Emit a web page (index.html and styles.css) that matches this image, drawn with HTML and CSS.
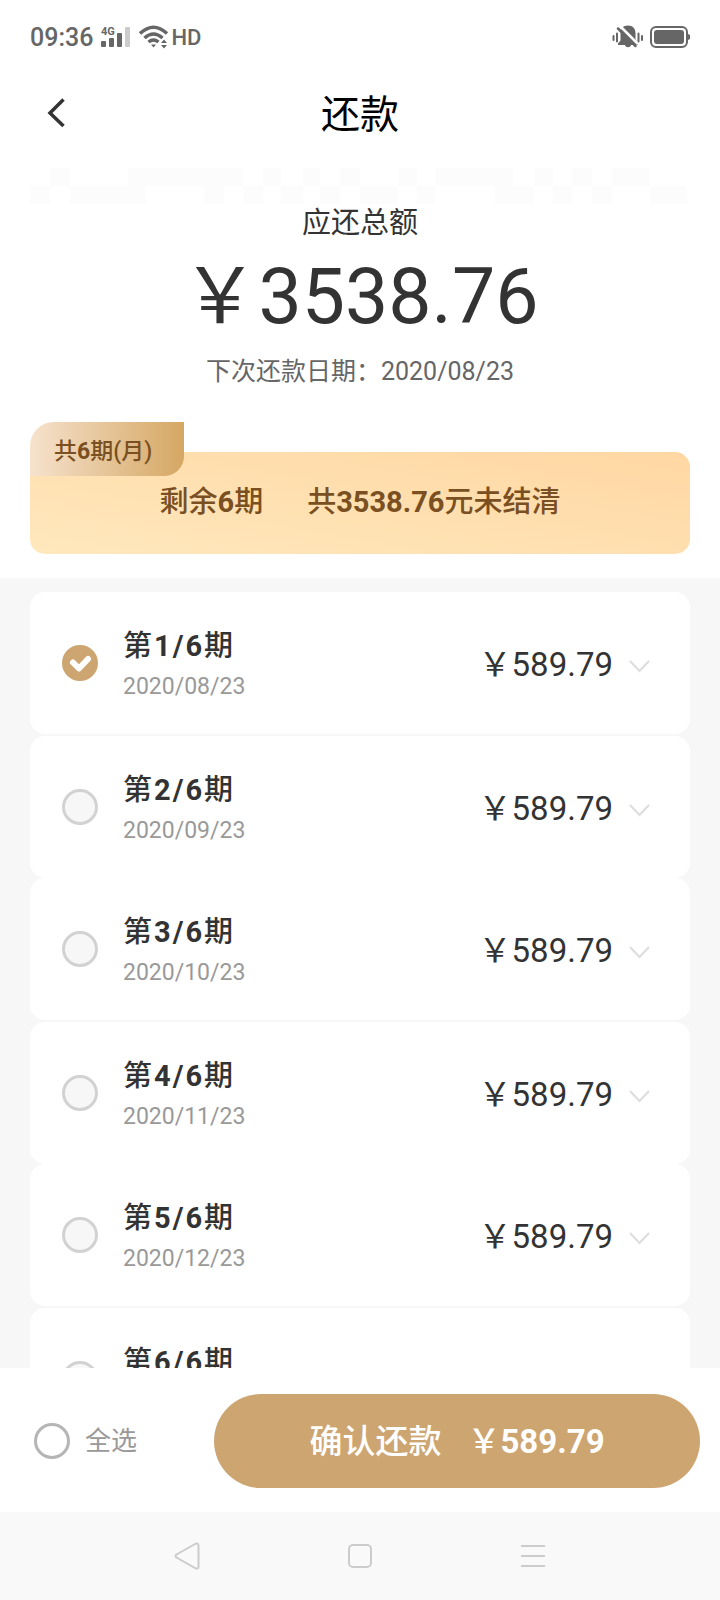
FILE: index.html
```
<!DOCTYPE html>
<html lang="zh-CN">
<head>
  <meta charset="UTF-8" />
  <meta name="viewport" content="width=device-width, initial-scale=1.0" />
  <title>还款</title>
  <link rel="stylesheet" href="styles.css">
</head>
<body>
  <div class="status-bar">
    <span class="time">09:36</span>
    <svg class="signal" width="30" height="22" viewBox="0 0 30 22" fill="#666">
      <text x="0" y="9" class="signal-label">4G</text>
      <rect x="0" y="15" width="5" height="6" rx="1" />
      <rect x="8" y="12" width="5" height="9" rx="1" />
      <rect x="16" y="7" width="5" height="14" rx="1" />
      <rect x="24" y="1" width="5" height="20" rx="1" fill="#ccc" />
    </svg>
    <svg class="wifi" width="30" height="24" viewBox="0 0 30 24" fill="none" stroke="#666" stroke-width="3.500">
      <path d="M1 8.500Q14.500 -4 28 8.500" />
      <path d="M5.500 13Q14.500 5 23.500 13" />
      <path d="M9.500 17Q14.500 13 19.500 17" />
      <path d="M12 19.500h5l-2.500 3z" fill="#666" stroke="none" />
      <path d="M22 18l3-3.500 3 3.500zM22 20h6l-3 3.500z" fill="#666" stroke="none" />
    </svg>
    <span class="hd">HD</span>
    <svg class="mute" width="32" height="24" viewBox="0 0 32 24" fill="#666">
      <path d="M16 0.500c5 0 7.500 3.500 7.500 7.500v6l2.500 5v1h-7c-.5 3-5.500 3-6 0H6v-1.500l2.500-3V8c0-4 2.500-7.500 7.500-7.500z" />
      <path d="M9 2L26 19" stroke="#fff" stroke-width="2.500" />
      <path d="M6 3.500L23.500 21" stroke="#666" stroke-width="2.500" stroke-linecap="round" />
      <path d="M1.500 11v4M5 8.500v8M26.500 8.500v8M30 11v4" stroke="#666" stroke-width="2" stroke-linecap="round" />
    </svg>
    <svg class="battery" width="40" height="22" viewBox="0 0 40 22">
      <rect x="1" y="1" width="36" height="20" rx="5" fill="none" stroke="#666" stroke-width="2" />
      <rect x="4" y="4" width="30" height="14" rx="3" fill="#666" />
      <path d="M38 8l2 1v4l-2 1z" fill="#666" />
    </svg>
  </div>

  <header class="header">
    <button class="back-button" aria-label="返回">
      <svg width="20" height="30" viewBox="0 0 20 30" fill="none" stroke="#333" stroke-width="3.500">
        <path d="M16.500 1.500L3 15l13.500 13" />
      </svg>
    </button>
    <h1>还款</h1>
  </header>

  <section class="summary">
    <svg class="mosaic" width="100%" height="36" viewBox="0 0 660 36" preserveAspectRatio="none" fill="#fcfcfc">
      <path d="M20 0h20v18H20zM98 0h115v18H98zM233 0h18v18h-18zM273 0h17v18h-17zM310 0h20v18h-20zM368 0h19v18h-19zM405 0h78v18h-78zM504 0h19v18h-19zM542 0h20v18h-20zM582 0h38v18h-38z" />
      <path d="M0 18h20v18H0zM40 18h76v18H40zM174 18h20v18h-20zM213 18h20v18h-20zM251 18h22v18h-22zM290 18h20v18h-20zM330 18h38v18h-38zM387 18h18v18h-18zM465 18h39v18h-39zM523 18h19v18h-19zM562 18h20v18h-20zM620 18h37v18h-37z" />
    </svg>
    <p class="summary-title">应还总额</p>
    <p class="summary-amount">￥3538.76</p>
    <p class="summary-date">下次还款日期：2020/08/23</p>
    <div class="banner">
      <span class="tag">共<b>6</b>期(月)</span>
      <span>剩余<b>6</b>期</span>
      <span>共<b>3538.76</b>元未结清</span>
    </div>
  </section>

  <main class="list">
    <div class="item">
      <label class="check">
        <input type="checkbox" id="p1" checked />
        <svg width="36" height="36" viewBox="0 0 36 36"><path d="M11 17.500l6 6 9-9.500" /></svg>
      </label>
      <label class="info" for="p1"><span class="period">第<b>1/6</b>期</span><span class="date">2020/08/23</span></label>
      <span class="price">￥589.79</span>
      <button class="expand" aria-label="展开"><svg width="21" height="13" viewBox="0 0 21 13"><path d="M1 1l9.500 10L20 1" /></svg></button>
    </div>
    <div class="item">
      <label class="check">
        <input type="checkbox" id="p2" />
        <svg width="36" height="36" viewBox="0 0 36 36"><path d="M11 17.500l6 6 9-9.500" /></svg>
      </label>
      <label class="info" for="p2"><span class="period">第<b>2/6</b>期</span><span class="date">2020/09/23</span></label>
      <span class="price">￥589.79</span>
      <button class="expand" aria-label="展开"><svg width="21" height="13" viewBox="0 0 21 13"><path d="M1 1l9.500 10L20 1" /></svg></button>
    </div>
    <div class="item">
      <label class="check">
        <input type="checkbox" id="p3" />
        <svg width="36" height="36" viewBox="0 0 36 36"><path d="M11 17.500l6 6 9-9.500" /></svg>
      </label>
      <label class="info" for="p3"><span class="period">第<b>3/6</b>期</span><span class="date">2020/10/23</span></label>
      <span class="price">￥589.79</span>
      <button class="expand" aria-label="展开"><svg width="21" height="13" viewBox="0 0 21 13"><path d="M1 1l9.500 10L20 1" /></svg></button>
    </div>
    <div class="item">
      <label class="check">
        <input type="checkbox" id="p4" />
        <svg width="36" height="36" viewBox="0 0 36 36"><path d="M11 17.500l6 6 9-9.500" /></svg>
      </label>
      <label class="info" for="p4"><span class="period">第<b>4/6</b>期</span><span class="date">2020/11/23</span></label>
      <span class="price">￥589.79</span>
      <button class="expand" aria-label="展开"><svg width="21" height="13" viewBox="0 0 21 13"><path d="M1 1l9.500 10L20 1" /></svg></button>
    </div>
    <div class="item">
      <label class="check">
        <input type="checkbox" id="p5" />
        <svg width="36" height="36" viewBox="0 0 36 36"><path d="M11 17.500l6 6 9-9.500" /></svg>
      </label>
      <label class="info" for="p5"><span class="period">第<b>5/6</b>期</span><span class="date">2020/12/23</span></label>
      <span class="price">￥589.79</span>
      <button class="expand" aria-label="展开"><svg width="21" height="13" viewBox="0 0 21 13"><path d="M1 1l9.500 10L20 1" /></svg></button>
    </div>
    <div class="item">
      <label class="check">
        <input type="checkbox" id="p6" />
        <svg width="36" height="36" viewBox="0 0 36 36"><path d="M11 17.500l6 6 9-9.500" /></svg>
      </label>
      <label class="info" for="p6"><span class="period">第<b>6/6</b>期</span></label>
    </div>
  </main>

  <footer class="pay-bar">
    <label class="select-all">
      <span class="check">
        <input type="checkbox" />
        <svg width="36" height="36" viewBox="0 0 36 36"><path d="M11 17.500l6 6 9-9.500" /></svg>
      </span>
      <span class="select-all-text">全选</span>
    </label>
    <button class="pay-button"><span>确认还款</span><span>￥<b>589.79</b></span></button>
  </footer>

  <nav class="system-nav">
    <button aria-label="后退">
      <svg width="26" height="28" viewBox="0 0 26 28"><path d="M22 1.500L2.500 12.500q-2 1.500 0 3L22 26.500q2.500 .5 2.500-2V4q0-3-2.500-2.500z" /></svg>
    </button>
    <button aria-label="主页">
      <svg width="24" height="24" viewBox="0 0 24 24"><rect x="1" y="1" width="22" height="22" rx="4" /></svg>
    </button>
    <button aria-label="菜单">
      <svg width="24" height="24" viewBox="0 0 24 24"><path d="M0 2h24M0 12h24M0 22h24" /></svg>
    </button>
  </nav>
</body>
</html>
```

FILE: styles.css
```
* {
  box-sizing: border-box;
  margin: 0;
  padding: 0;
}

body {
  display: flex;
  flex-direction: column;
  height: 100vh;
  overflow: hidden;
  font-family: Roboto, "Noto Sans CJK SC", sans-serif;
  background: #fff;
  color: #333;
}

button {
  border: none;
  background: none;
  font-family: inherit;
  cursor: pointer;
}

svg {
  display: block;
}

b {
  font-weight: 700;
}

/* status bar */
.status-bar {
  display: flex;
  align-items: center;
  height: 74px;
  padding: 0 30px;
  color: #666;
}

.time {
  font-size: 25px;
  font-weight: 500;
}

.signal {
  margin-left: 8px;
}

.signal-label {
  font-size: 11px;
  font-weight: 700;
}

.wifi {
  margin-left: 8px;
}

.hd {
  margin-left: 2px;
  font-size: 22px;
  font-weight: 500;
}

.mute {
  margin-left: auto;
}

.battery {
  margin-left: 6px;
}

/* header */
.header {
  display: grid;
  grid-template-columns: 80px 1fr 80px;
  align-items: center;
  height: 78px;
}

.back-button {
  padding-left: 47px;
}

.header h1 {
  padding-bottom: 5px;
  font-size: 39px;
  font-weight: 400;
  text-align: center;
  color: #000;
}

/* summary */
.summary {
  padding: 16px 30px 24px;
  text-align: center;
}

.summary-title {
  font-size: 29px;
  line-height: 38px;
}

.summary-amount {
  font-size: 77px;
  line-height: 110px;
}

.summary-date {
  font-size: 25px;
  line-height: 40px;
  color: #666;
}

.banner {
  position: relative;
  display: flex;
  justify-content: center;
  gap: 44px;
  margin-top: 60px;
  padding: 30px 0 32px;
  border-radius: 15px;
  background: linear-gradient(10deg, #ffe8bd, #ffd7a3);
  color: #7a5022;
  font-size: 29px;
  font-weight: 500;
  line-height: 40px;
}

.tag {
  position: absolute;
  top: -30px;
  left: 0;
  padding: 6px 32px 0 24px;
  border-radius: 24px 0 20px 0;
  background: linear-gradient(90deg, #f6e2cd, #d5a763);
  font-size: 23px;
  line-height: 48px;
}

/* repayment list */
.list {
  flex: 1;
  min-height: 0;
  overflow: hidden;
  padding: 14px 30px 0;
  background: #f7f7f7;
}

.item {
  display: flex;
  align-items: center;
  height: 142px;
  padding: 0 40px 0 32px;
  border-radius: 15px;
  background: #fff;
}

.item:nth-child(odd) {
  margin-bottom: 2px;
}

.check {
  display: grid;
}

.check input,
.check svg {
  grid-area: 1 / 1;
}

.check input {
  appearance: none;
  width: 36px;
  height: 36px;
  border: 3px solid #d2d2d2;
  border-radius: 50%;
  background: #f7f7f7;
}

.check input:checked {
  border-color: #cda571;
  background: #cda571;
}

.check svg {
  display: none;
  fill: none;
  stroke: #fff;
  stroke-width: 6;
  stroke-linecap: round;
  stroke-linejoin: round;
  pointer-events: none;
}

.check input:checked + svg {
  display: block;
}

.info {
  display: flex;
  flex-direction: column;
  flex: 1;
  height: 78px;
  margin-left: 25px;
}

.period {
  font-size: 29px;
  font-weight: 500;
  line-height: 44px;
  letter-spacing: 2px;
}

.date {
  font-size: 23px;
  line-height: 38px;
  color: #999;
}

.price {
  padding-bottom: 2px;
  font-size: 33px;
}

.expand {
  margin-left: 16px;
  padding-top: 6px;
}

.expand svg {
  fill: none;
  stroke: #ddd;
  stroke-width: 2;
}

/* bottom bar */
.pay-bar {
  display: flex;
  align-items: center;
  padding: 26px 20px 24px;
}

.select-all {
  display: flex;
  align-items: center;
  gap: 15px;
  width: 194px;
  padding-left: 14px;
  font-size: 26px;
  color: #999;
}

.select-all-text {
  padding-bottom: 5px;
}

.select-all input {
  border-color: #b5b5b5;
  background: #fff;
}

.pay-button {
  display: flex;
  align-items: center;
  justify-content: center;
  gap: 26px;
  flex: 1;
  height: 94px;
  padding-bottom: 5px;
  border-radius: 47px;
  background: #cda571;
  color: #fff;
  font-size: 33px;
  font-weight: 500;
}

.system-nav {
  display: grid;
  grid-template-columns: repeat(3, 1fr);
  align-items: center;
  height: 88px;
  padding: 0 100px;
  background: #f9f9f9;
}

.system-nav button {
  display: flex;
  justify-content: center;
}

.system-nav svg {
  fill: none;
  stroke: #ccc;
  stroke-width: 2;
}
```
